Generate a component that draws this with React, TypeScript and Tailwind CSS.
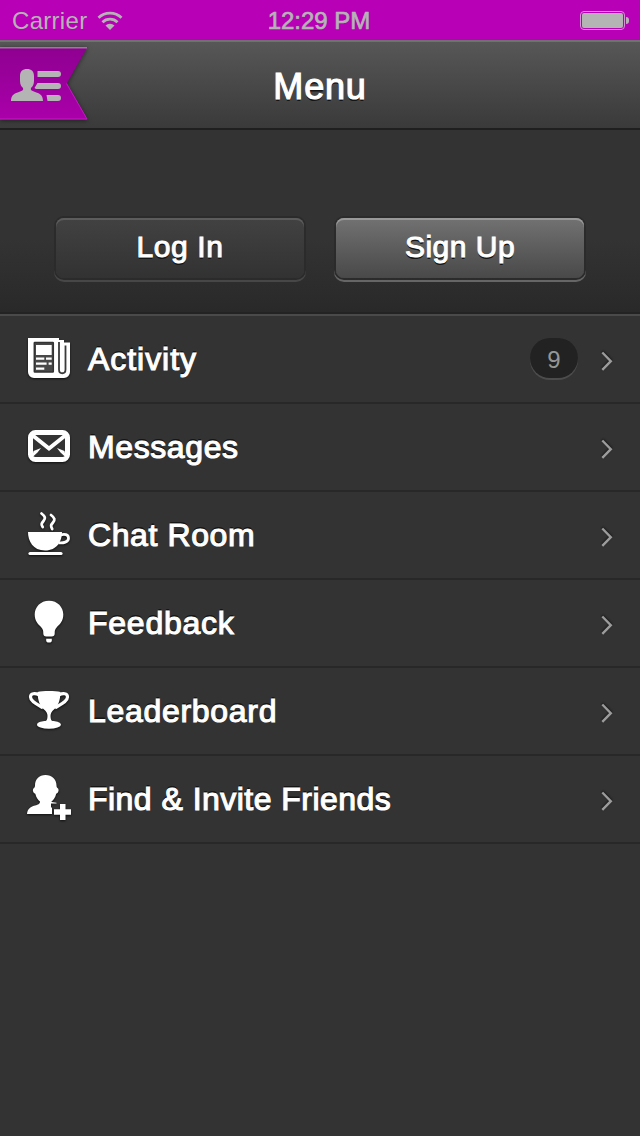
import type { ReactNode } from 'react'

const icons: Record<string, ReactNode> = {
  activity: (
    <>
      <path d="M4 2h31v2h5v2.500h6V36a6 6 0 0 1-6 6H10a6 6 0 0 1-6-6z" fill="#fff" />
      <rect x="10.300" y="6.500" width="19" height="29.500" rx="0.500" fill="#484848" stroke="#333" strokeWidth="1.500" />
      <path d="M12 9h15.700v10H12z" fill="#fff" />
      <path d="M12 22.600h8.300M22 22.600h5.700M12 27.600h10.600M24.600 27.600h3.100M12 32.600h8.300" stroke="#fff" strokeWidth="2.400" />
      <path d="M35 6v27.500c0 5 6.500 5 6.500 0V9.500" fill="none" stroke="#3a3a3a" strokeWidth="1.800" />
    </>
  ),
  messages: (
    <>
      <rect x="6.500" y="8.500" width="37" height="27" rx="5" fill="#333" stroke="#fff" strokeWidth="5" />
      <path d="M7.500 10.500L25 24.500l17.500-14" fill="none" stroke="#fff" strokeWidth="4" />
      <path d="M8 33.500l1.500-6.500 7.500-3-3.500 4.500zM42 33.500L40.500 27 33 24l3.500 4.500z" fill="#fff" />
    </>
  ),
  chat: (
    <>
      <path d="M4 20h34c0 9-5 18.500-17 18.500S4 29 4 20z" fill="#fff" />
      <path d="M36.500 23c4-1.500 8-.5 8 3.300s-5 5-10 4.500" fill="none" stroke="#fff" strokeWidth="2.800" />
      <path d="M6 41.500h31" stroke="#fff" strokeWidth="3.200" strokeLinecap="round" />
      <path d="M17.500 1.500c4 3 4.200 5 2 7.500s-2.500 3.500-.8 6M27 3c4 3 4.200 5 2 7.500s-2.500 3.500-.8 6.500" fill="none" stroke="#fff" strokeWidth="2.800" strokeLinecap="round" />
    </>
  ),
  feedback: (
    <>
      <path d="M25 .7C16.500.7 10.700 7 10.700 14.500c0 6.500 3.300 9.500 6.300 12.500 2.300 2.500 2.300 4 2.300 6.500 0 2 1 3 3 3h5.400c2 0 3-1 3-3 0-2.500 0-4 2.300-6.500 3-3 6.300-6 6.300-12.500C39.300 7 33.500.7 25 .7z" fill="#fff" />
      <path d="M22.200 38.700h5.600v2.500l-1.300 1.300h-3l-1.300-1.300z" fill="#fff" />
    </>
  ),
  leaderboard: (
    <>
      <path d="M13.500 4c5-1.300 18-1.300 23 0-.3 9-2.500 14-6 17-3 2.600-4 4.500-4 7 0 3.500 1 5 3 6h-9c2-1 3-2.500 3-6 0-2.500-1-4.400-4-7-3.500-3-5.700-8-6-17z" fill="#fff" />
      <ellipse cx="25" cy="36.700" rx="12" ry="4" fill="#fff" />
      <path d="M15 6.800C11 5 6.500 5.200 6.500 9c0 4.500 7 7.500 12.500 11M35 6.800c4-1.800 8.500-1.600 8.500 2.200 0 4.500-7 7.500-12.500 11" fill="none" stroke="#fff" strokeWidth="3.200" />
    </>
  ),
  friends: (
    <>
      <path d="M21.500-1C15-1 11 3.500 11 9.500c0 1-.2 1.800-1 2.500-1.800 1-1.300 5 1.300 5.700 1 4 2.700 6 4.700 7.800 0 2.500-1.500 3-5 4-5 1.500-7.500 3.500-8 8.500h25v-6.500h-1v-4h5.500v-.8l-5-.7v-.5c2-1.800 3.700-3.800 4.700-7.800 2.600-.7 3.100-4.700 1.300-5.700-.8-.7-1-1.500-1-2.500C32.500 3.500 28-1 21.500-1z" fill="#fff" />
      <path d="M36 28h5.500v5.300H47v5.400h-5.500V44H36v-5.300h-6v-5.400h6z" fill="#fff" />
    </>
  ),
}

const items = [
  { name: 'Activity', icon: 'activity', tracking: 'tracking-[0.95px]', badge: '9' },
  { name: 'Messages', icon: 'messages', tracking: 'tracking-[0.6px]' },
  { name: 'Chat Room', icon: 'chat', tracking: 'tracking-[0.6px]' },
  { name: 'Feedback', icon: 'feedback', tracking: 'tracking-[0.75px]' },
  { name: 'Leaderboard', icon: 'leaderboard', tracking: 'tracking-[0.7px]' },
  { name: 'Find & Invite Friends', icon: 'friends', tracking: 'tracking-[0.47px]' },
]

function StatusBar() {
  return (
    <div className="grid h-10 grid-cols-3 items-center bg-[#b800b6] pl-3 pr-[11px] text-2xl text-[#b4b4b4]">
      <div className="flex items-center gap-2.5 pt-px">
        <span className="tracking-[0.3px]">Carrier</span>
        <svg width="26" height="20" viewBox="0 0 26 20" fill="none" stroke="currentColor" strokeWidth="2.800">
          <path d="M1.500 6.700a16.500 16.500 0 0 1 23 0M5.500 11.200a10.700 10.700 0 0 1 15 0" />
          <path d="M8.500 14.500a6.500 6.500 0 0 1 9 0L13 19z" fill="currentColor" stroke="none" />
        </svg>
      </div>
      <span className="pr-[3px] pt-0.5 text-center [-webkit-text-stroke:0.7px_#b4b4b4]">12:29 PM</span>
      <div className="flex items-center justify-end gap-px">
        <div className="h-[19px] w-[45px] rounded-[4px] border border-[#dc8cdc] p-px">
          <div className="h-full rounded-[2px] bg-[#b4b4b4]" />
        </div>
        <div className="h-[7px] w-[3px] rounded-r-full bg-[#b4b4b4]" />
      </div>
    </div>
  )
}

function Ribbon() {
  return (
    <svg className="absolute left-0 top-[3px] overflow-visible" width="90" height="76" viewBox="0 45 90 76">
      <defs>
        <linearGradient id="ribbon" x1="0" y1="0" x2="0" y2="1">
          <stop offset="0" stopColor="#8e0090" />
          <stop offset="1" stopColor="#aa00aa" />
        </linearGradient>
      </defs>
      <g className="[filter:drop-shadow(0_1px_2px_rgba(0,0,0,0.5))]">
        <path d="M0 47h87.500L67 83l20.500 36.500H0z" fill="url(#ribbon)" />
      </g>
      <path d="M0 47.700h87" stroke="#a672a6" strokeWidth="1.400" />
      <path d="M66.500 83.500L87 119H0" fill="none" stroke="#c21ac2" strokeWidth="1" />
      <g fill="#b4b4b4">
        <path d="M27 69c-4.500 0-7 2.500-7 7v5c0 3.500 1.300 5.500 3 7 .8 2-.5 2.800-3.500 3.800-5 1.700-8.500 3.200-8.500 9.200h32c0-6-3.500-7.500-8.500-9.200-3-1-4.300-1.800-3.500-3.800 1.700-1.500 3-3.500 3-7v-5c0-4.500-2.500-7-7-7z" />
        <path d="M37.500 71H58a3 3 0 0 1 0 6H37.500zM37.500 83H58a3 3 0 0 1 0 6H36l-1.500-1zM46.500 95H58a3 3 0 0 1 0 6H47.500z" />
      </g>
    </svg>
  )
}

export default function App() {
  return (
    <div className="flex h-[1136px] w-[640px] flex-col overflow-hidden bg-[#333] font-['Liberation_Sans',Arial,sans-serif] text-white">
      <StatusBar />

      <header className="relative flex h-[90px] items-center justify-center border-t-2 border-b-2 border-t-[#707070] border-b-[#1f1f1f] bg-linear-to-b from-[#575757] to-[#3a3a3a]">
        <Ribbon />
        <h1 className="pt-[3px] text-[36px] leading-none tracking-[0.8px] [-webkit-text-stroke:1.2px_white] [text-shadow:0_2px_0_#151515]">Menu</h1>
      </header>

      <section className="flex h-[184px] justify-center gap-8 border-b-2 border-[#232323] bg-linear-to-b from-[#333] from-60% to-[#292929] pt-[88px] text-[30px] leading-none [text-shadow:0_2px_0_#151515]">
        <button className="h-[60px] w-[248px] rounded-lg bg-linear-to-b from-[#424242] to-[#323232] pb-0.5 tracking-[0.6px] shadow-[inset_0_2px_0_#5c5c5c,0_0_0_2px_#2b2b2b,0_2px_0_2px_#474747] [-webkit-text-stroke:1px_white] [text-shadow:inherit]">
          Log In
        </button>
        <button className="h-[60px] w-[248px] rounded-lg bg-linear-to-b from-[#727272] to-[#494949] pb-0.5 tracking-[0.5px] shadow-[inset_0_2px_0_#999,0_0_0_2px_#2b2b2b,0_2px_0_2px_#666] [-webkit-text-stroke:1px_white] [text-shadow:inherit]">
          Sign Up
        </button>
      </section>

      <ul className="border-t-2 border-[#4a4a4a]">
        {items.map((item) => (
          <li key={item.name} className="flex h-[88px] items-center border-b-2 border-[#282828] pl-6 pr-[26px]">
            <svg className="mr-4 overflow-visible drop-shadow-[0_1px_1px_rgba(0,0,0,0.7)]" width="48" height="48" viewBox="0 -1 48 48">
              {icons[item.icon]}
            </svg>
            <span className={`flex-1 text-[32px] leading-none [-webkit-text-stroke:1.1px_white] [text-shadow:0_-2px_0_#151515] ${item.tracking}`}>
              {item.name}
            </span>
            {item.badge && (
              <span className="mb-0.5 mr-[22px] flex h-10 w-12 items-center justify-center rounded-[20px] bg-[#222] pt-1 text-2xl text-[#969696] shadow-[0_2px_0_#4c4c4c]">
                {item.badge}
              </span>
            )}
            <svg className="mt-1 drop-shadow-[0_-1px_1px_rgba(0,0,0,0.6)]" width="14" height="22" viewBox="0 0 14 22" fill="none" stroke="#9c9c9c" strokeWidth="2.400">
              <path d="M2.300 2.500l8.500 8.700-8.500 8.700" />
            </svg>
          </li>
        ))}
      </ul>
    </div>
  )
}
